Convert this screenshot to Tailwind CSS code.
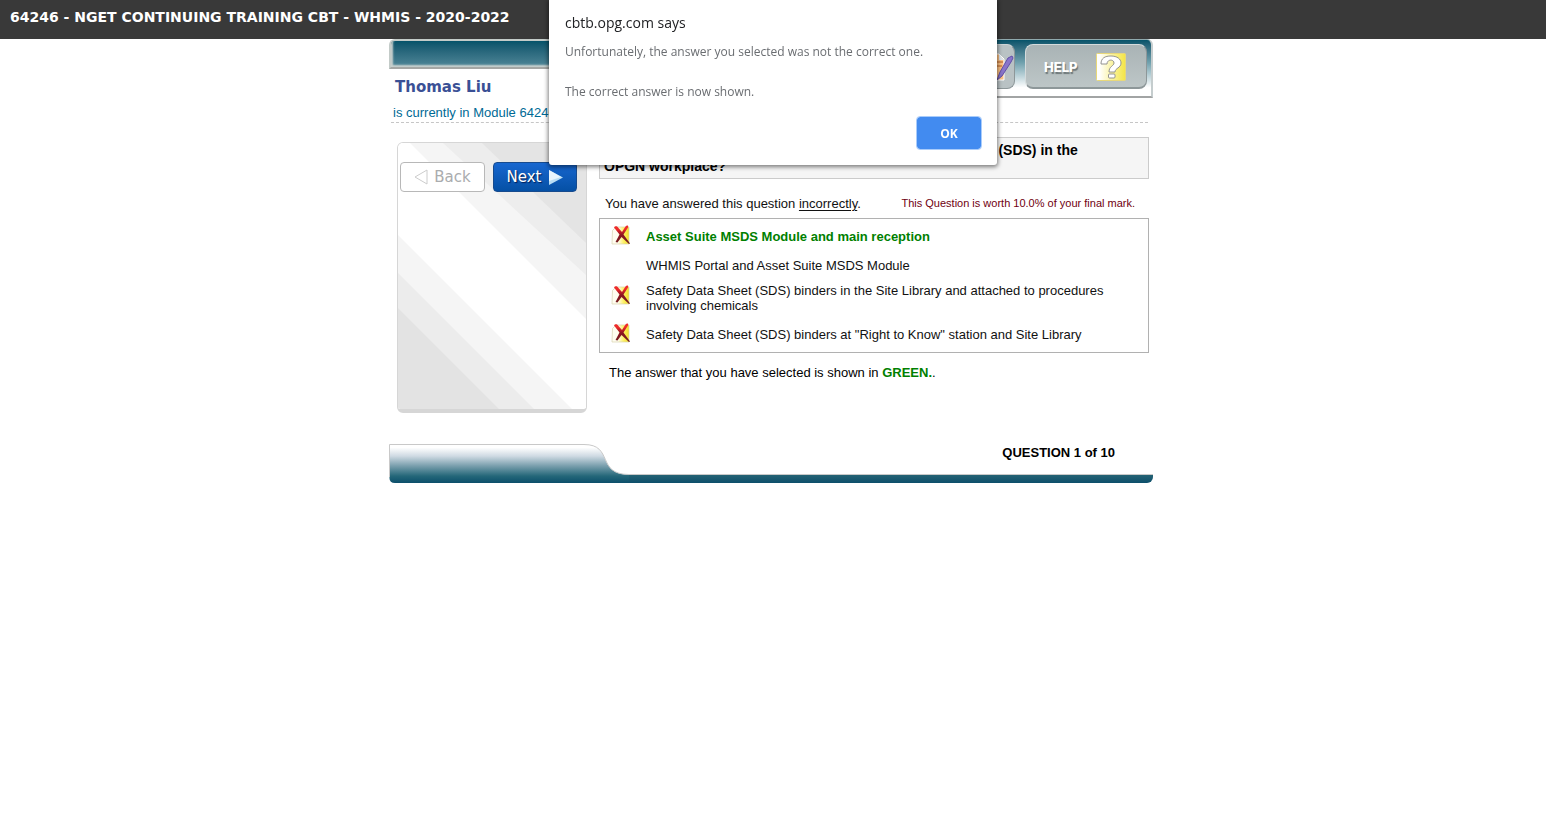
<!DOCTYPE html>
<html lang="en">
<head>
<meta charset="utf-8">
<meta name="viewport" content="width=device-width, initial-scale=1">
<title>64246 - NGET CONTINUING TRAINING CBT - WHMIS - 2020-2022</title>
<script src="https://cdn.jsdelivr.net/npm/@tailwindcss/browser@4"></script>
</head>
<body class="min-h-screen bg-white font-['Liberation_Sans',Arial,sans-serif] text-[13px] leading-[15px] text-[#111]">
<svg class="absolute h-0 w-0" aria-hidden="true">
  <defs>
  <linearGradient id="note"><stop offset=".35" stop-color="#fffef0"/><stop offset=".7" stop-color="#fdf060"/><stop offset="1" stop-color="#f3dc28"/></linearGradient>
  <linearGradient id="cross" x2="0" y2="1"><stop offset=".2" stop-color="#ef2b2b"/><stop offset=".5" stop-color="#8e1420"/><stop offset="1" stop-color="#6d2020"/></linearGradient>
  </defs>
  <symbol id="wrong" viewBox="0 0 20 20">
    <path d="M1.500 5.500 5 2h13v17H1z" fill="url(#note)" stroke="#d8d3b0" stroke-width=".7"/>
    <path d="M3 2.500C4 .500 6.500 1 7.500 3l3.500 4 3.500-5.500C15.500 0 18 0 17 2.500L12.500 9.500l6.500 9-1 .5L10.500 12 6.500 17.500l-2-.5L8.500 9.500z" fill="url(#cross)"/>
  </symbol>
</svg>

<header class="h-[39px] bg-[#393939] px-[10px] pt-2">
  <h1 class="font-['DejaVu_Sans',Verdana,sans-serif] text-[14px] leading-[18px] font-bold text-white">64246 - NGET CONTINUING TRAINING CBT - WHMIS - 2020-2022</h1>
</header>

<div class="pr-1">
<main class="mx-auto max-w-[764px]">
  <div class="flex items-start">
    <div class="flex-1">
      <div class="h-[30px] rounded-tl-md border-t-2 border-b-2 border-l-2 border-t-[#c3cbc8] border-b-[#a5a7a5] border-l-[#c3cbc8] bg-linear-to-b from-[#04536a] to-[#4f8798] shadow-[inset_2px_-2px_2px_#c8d0ce]"></div>
      <h2 class="mt-2 ml-[6px] font-['DejaVu_Sans',Verdana,sans-serif] text-[15px] leading-5 font-bold text-[#3a5095]">Thomas Liu</h2>
    </div>
    <div class="flex h-[59px] w-64 items-start justify-end gap-[10px] rounded-tr-md border-t border-r-2 border-b-2 border-t-[#8fa9ad] border-r-[#c5cdce] border-b-[#a2a4a4] bg-linear-to-b from-[#04536a] via-[#6fa0ad] via-40% to-white to-85% pt-1 pr-1">
      <button aria-label="Notes" class="flex h-[45px] w-28 items-center justify-end rounded-lg border border-[#cfd5d6] border-r-[#8d9799] border-b-[#8d9799] bg-[#b9c2c4]">
        <svg class="h-8 w-8" viewBox="0 0 32 32"><path d="M4 3h13l5 5v21H4z" fill="#fbc083" stroke="#fff"/><path d="M17 3v6h5z" fill="#dfe9f2"/><path d="M14 11h7M14 15h6" stroke="#b45d25"/><path d="M15 29l3-8L26 7l4-2 1 2-2 4-9 14z" fill="#8975c9" stroke="#6150a8"/></svg>
      </button>
      <button class="flex h-[45px] w-[122px] items-center justify-between rounded-lg border border-b-2 border-[#d5dbdc] border-r-[#8d9799] border-b-[#8d9799] bg-linear-to-b from-[#a9b3b5] to-[#bdc6c7] pt-[2px] pr-5 pl-[18px] font-['Inter',sans-serif] text-[13px] font-extrabold text-white [text-shadow:1px_2px_1px_#6d7779]">HELP
        <svg class="h-[30px] w-[30px]" viewBox="0 0 30 30"><defs><linearGradient id="hy"><stop offset=".1" stop-color="#fff"/><stop offset=".65" stop-color="#f8f08a"/><stop offset="1" stop-color="#f4e545"/></linearGradient></defs><rect x=".5" y="1.500" width="29" height="27" rx="1" fill="url(#hy)" stroke="#e8d87a"/><path d="M5 12C5 6 9 4 15 4c6 0 10 3 10 7 0 5-6 5-6 9h-6c0-6 5-6 5-9 0-4-7-4-7 1z" fill="#fff" stroke="#888" stroke-width=".9"/><rect x="12.500" y="22" width="6.500" height="4" rx="1" fill="#fff" stroke="#888" stroke-width=".9"/></svg>
      </button>
    </div>
  </div>

  <p class="mr-[5px] ml-[2px] border-b border-dashed border-[#c6c6c6] pt-[7px] pb-[2px] pl-[2px] text-[13px] text-[#006a95]">is currently in Module 64246</p>

  <div class="flex items-start gap-3 pt-[14px] pr-1 pl-2">
    <nav class="relative isolate mt-[5px] h-[271px] w-[190px] shrink-0 overflow-hidden rounded-md border border-b-4 border-[#d6d6d6] px-[2px] pt-[19px]">
      <svg class="absolute inset-0 -z-10 h-full w-full" viewBox="0 0 188 266" preserveAspectRatio="none">
        <rect width="188" height="266" fill="#fff"/>
        <path d="M12 0 188 176V0z" fill="#f5f5f5"/><path d="M45 0 188 132V0z" fill="#ededed"/><path d="M84 0 188 100V0z" fill="#e4e4e4"/>
        <path d="M0 92 174 266H0z" fill="#f5f5f5"/><path d="M0 130 136 266H0z" fill="#ececec"/><path d="M0 165 101 266H0z" fill="#e3e3e3"/>
      </svg>
      <div class="flex gap-2 font-['DejaVu_Sans',Verdana,sans-serif] text-[15px]">
        <button class="flex h-[30px] w-[85px] items-center justify-center gap-[6px] rounded border border-[#b8b8b8] bg-white text-[#aaacae]" disabled>
          <svg class="h-4 w-[14px]" viewBox="0 0 14 16"><path d="M13 1v14L1 8z" fill="#fff" stroke="#ccc"/></svg>Back</button>
        <button class="flex h-[30px] w-[84px] items-center justify-center gap-2 rounded border border-[#174b8e] bg-linear-to-b from-[#1767d0] to-[#0550a5] text-white [text-shadow:1px_1px_1px_#001d55]">Next
          <svg class="h-[15px] w-[14px]" viewBox="0 0 14 15"><path d="M0 0v15l14-7.500z" fill="#b9def5"/><path d="M0 0v11L12 7z" fill="#e8f5fd"/></svg></button>
      </div>
    </nav>

    <section class="min-w-0 flex-1">
      <h3 class="border border-[#cbcbcb] bg-[#f5f5f5] px-1 pt-1 pb-1 text-[14px] leading-4 font-bold text-black">Where would you look to find the latest Safety Data Sheets (SDS) in the<br>OPGN workplace?</h3>
      <div class="flex items-center justify-between pt-[17px] pr-[14px] pb-[7px] pl-[6px]">
        <p>You have answered this question <u class="underline-offset-2">incorrectly</u>.</p>
        <p class="text-[11px] text-[#700010]">This Question is worth 10.0% of your final mark.</p>
      </div>
      <ul class="flex flex-col gap-[10px] border border-[#b1b1b1] py-[10px] pr-5 pl-[11px]">
        <li class="flex items-start gap-[15px] font-bold text-[#008000]"><svg class="-mt-1 -mb-2 h-5 w-5 shrink-0"><use href="#wrong"/></svg>Asset Suite MSDS Module and main reception</li>
        <li class="mt-1 pl-[35px]">WHMIS Portal and Asset Suite MSDS Module</li>
        <li class="flex items-start gap-[15px]"><svg class="mt-[2px] h-5 w-5 shrink-0"><use href="#wrong"/></svg>Safety Data Sheet (SDS) binders in the Site Library and attached to procedures involving chemicals</li>
        <li class="mt-1 flex items-start gap-[15px]"><svg class="-mt-1 -mb-2 h-5 w-5 shrink-0"><use href="#wrong"/></svg>Safety Data Sheet (SDS) binders at "Right to Know" station and Site Library</li>
      </ul>
      <p class="pt-3 pl-[10px] text-black">The answer that you have selected is shown in <b class="text-[#008000]">GREEN.</b>.</p>
    </section>
  </div>

  <footer class="mt-[30px] flex h-10">
    <svg class="h-10 w-60 shrink-0" viewBox="0 0 240 40">
      <defs><linearGradient id="foot" x2="0" y2="1"><stop offset=".08" stop-color="#fff"/><stop offset=".3" stop-color="#cfdae3"/><stop offset=".55" stop-color="#7ba0ae"/><stop offset=".82" stop-color="#246779"/><stop offset="1" stop-color="#0c4f6b"/></linearGradient></defs>
      <path d="M.5 1.500H195C225 1.500 207 31.500 240 31.500V40H6Q0 40 .5 34z" fill="url(#foot)"/>
      <path d="M.5 34V1.500H195C225 1.500 207 31.500 240 31.500" fill="none" stroke="#c9c9c9"/>
    </svg>
    <div class="flex flex-1 flex-col justify-between">
      <p class="pt-[2px] pr-[38px] text-right text-[13px] font-bold text-black">QUESTION 1 of 10</p>
      <div class="h-[9px] rounded-br-md border-t border-[#c9c9c9] bg-linear-to-b from-[#246274] to-[#0c4f6b]"></div>
    </div>
  </footer>
</main>
</div>

<div role="dialog" aria-modal="true" aria-labelledby="dlg" class="fixed top-0 left-1/2 flex w-[448px] -translate-x-1/2 flex-col rounded-b-[3px] bg-white px-4 pt-3 pb-4 font-['Open_Sans','Noto_Sans',sans-serif] shadow-[0_1px_4px_1px_rgba(0,0,0,0.5)]">
  <h2 id="dlg" class="text-[14px] leading-[22px] text-[#202124]">cbtb.opg.com says</h2>
  <p class="mt-2 text-[12px] leading-5 text-[#6a6d71]">Unfortunately, the answer you selected was not the correct one.<br><br>The correct answer is now shown.</p>
  <button class="mt-[15px] h-8 w-16 self-end rounded-[3px] bg-[#428bf0] text-[12px] font-bold text-white outline outline-[#a9ccfb]">OK</button>
</div>
</body>
</html>
